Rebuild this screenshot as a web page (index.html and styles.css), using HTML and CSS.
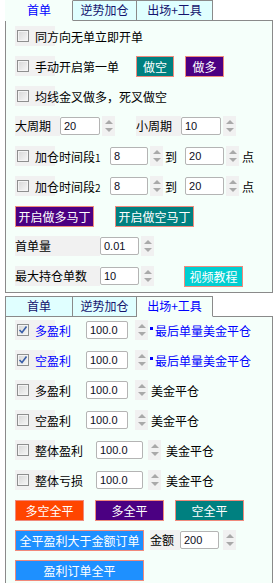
FILE: index.html
```html
<!DOCTYPE html>
<html lang="zh-CN">
<head>
    <meta charset="UTF-8">
    <title>EA 面板</title>
    <link rel="stylesheet" href="styles.css">
</head>
<body>
    <!-- 面板一：首单 -->
    <div class="panel first">
        <div class="tabs">
            <div class="tab t1 active">首单</div>
            <div class="tab t2">逆势加仓</div>
            <div class="tab t3">出场+工具</div>
        </div>
        <div class="body">
            <div class="row">
                <div class="check"><span class="box"></span>同方向无单立即开单</div>
            </div>
            <div class="row">
                <div class="check w121"><span class="box"></span>手动开启第一单</div>
                <div class="btn teal b38">做空</div>
                <div class="btn indigo b39 ml11">做多</div>
            </div>
            <div class="row">
                <div class="check"><span class="box"></span>均线金叉做多，死叉做空</div>
            </div>
            <div class="row">
                <div class="lbl w45">大周期</div>
                <div class="num"><div class="field w40">20</div><div class="spin"></div></div>
                <div class="lbl w45 ml21">小周期</div>
                <div class="num"><div class="field w40">10</div><div class="spin"></div></div>
            </div>
            <div class="row">
                <div class="check w95"><span class="box"></span>加仓时间段<small>1</small></div>
                <div class="num"><div class="field w38">8</div><div class="spin"></div></div>
                <div class="txt ml2">到</div>
                <div class="num ml8"><div class="field w39">20</div><div class="spin"></div></div>
                <div class="txt ml3">点</div>
            </div>
            <div class="row">
                <div class="check w95"><span class="box"></span>加仓时间段<small>2</small></div>
                <div class="num"><div class="field w38">8</div><div class="spin"></div></div>
                <div class="txt ml2">到</div>
                <div class="num ml8"><div class="field w39">20</div><div class="spin"></div></div>
                <div class="txt ml3">点</div>
            </div>
            <div class="row">
                <div class="btn indigo b79">开启做多马丁</div>
                <div class="btn teal b79 ml21">开启做空马丁</div>
            </div>
            <div class="row">
                <div class="lbl w85">首单量</div>
                <div class="num"><div class="field w39">0.01</div><div class="spin"></div></div>
            </div>
            <div class="row">
                <div class="lbl w85">最大持仓单数</div>
                <div class="num"><div class="field w39">10</div><div class="spin"></div></div>
                <div class="btn turq b59 ml30">视频教程</div>
            </div>
        </div>
    </div>

    <!-- 面板二：出场+工具 -->
    <div class="panel second">
        <div class="tabs">
            <div class="tab t1">首单</div>
            <div class="tab t2">逆势加仓</div>
            <div class="tab t3 active">出场+工具</div>
        </div>
        <div class="body">
            <div class="row">
                <div class="check w71 blue"><span class="box on"></span>多盈利</div>
                <div class="num"><div class="field w42">100.0</div><div class="spin ml7"></div></div>
                <div class="txt blue ml2"><span class="dot"></span>最后单量美金平仓</div>
            </div>
            <div class="row">
                <div class="check w71 blue"><span class="box on"></span>空盈利</div>
                <div class="num"><div class="field w42">100.0</div><div class="spin ml7"></div></div>
                <div class="txt blue ml2"><span class="dot"></span>最后单量美金平仓</div>
            </div>
            <div class="row">
                <div class="check w71"><span class="box"></span>多盈利</div>
                <div class="num"><div class="field w42">100.0</div><div class="spin ml7"></div></div>
                <div class="txt ml3">美金平仓</div>
            </div>
            <div class="row">
                <div class="check w71"><span class="box"></span>空盈利</div>
                <div class="num"><div class="field w42">100.0</div><div class="spin ml7"></div></div>
                <div class="txt ml3">美金平仓</div>
            </div>
            <div class="row">
                <div class="check w81"><span class="box"></span>整体盈利</div>
                <div class="num"><div class="field w47">100.0</div><div class="spin ml5"></div></div>
                <div class="txt ml5">美金平仓</div>
            </div>
            <div class="row">
                <div class="check w81"><span class="box"></span>整体亏损</div>
                <div class="num"><div class="field w47">100.0</div><div class="spin ml5"></div></div>
                <div class="txt ml5">美金平仓</div>
            </div>
            <div class="row">
                <div class="btn orange b69">多空全平</div>
                <div class="btn indigo b69 ml11">多全平</div>
                <div class="btn teal b69 ml11">空全平</div>
            </div>
            <div class="row">
                <div class="btn dodger b129">全平盈利大于金额订单</div>
                <div class="lbl ml6 w30">金额</div>
                <div class="num"><div class="field w39">200</div><div class="spin ml4"></div></div>
            </div>
            <div class="row">
                <div class="btn dodger b129">盈利订单全平</div>
            </div>
        </div>
    </div>
</body>
</html>
```

FILE: styles.css
```css
body {
    margin: 0;
    background: #fff;
    font-family: "Noto Sans CJK SC", "Noto Sans", sans-serif;
    font-size: 12px;
    color: #000;
}
.panel {
    margin-left: 5px;
    width: 268px;
}
.panel.second {
    margin-top: 3px;
}
.tabs {
    display: flex;
    height: 21px;
    position: relative;
    z-index: 1;
}
.tab {
    box-sizing: border-box;
    height: 21px;
    line-height: 18px;
    text-align: center;
    background: #e0ffff;
    border: 1px solid #8a8a8a;
    border-left: none;
    color: #14146e;
    font-size: 12px;
}
.tab.t1 { width: 68px; border-left: 1px solid #8a8a8a; }
.tab.t2 { width: 64px; }
.tab.t3 { width: 76px; }
.tab.active {
    background: #f5fffa;
    color: #0000ff;
    border-bottom-color: #f5fffa;
}
.first .tab.active {
    border-top-color: #f5fffa;
    border-left-color: #f5fffa;
}
.body {
    margin-top: -1px;
    background: #f5fffa;
    border: 1px solid #8a8a8a;
    padding: 5px 0 6px 9px;
    display: flex;
    flex-direction: column;
    gap: 10px;
}
.second .body {
    padding-top: 3px;
    padding-bottom: 20px;
}
.row {
    display: flex;
    align-items: center;
    height: 20px;
}
.check {
    display: flex;
    align-items: center;
    height: 20px;
    padding-left: 2px;
    box-sizing: border-box;
    white-space: nowrap;
    background: linear-gradient(to right, #f1f1f1 40px, transparent 40px);
}
.check small {
    font-size: 10px;
    margin-top: 2px;
}
.box {
    box-sizing: border-box;
    width: 12px;
    height: 12px;
    margin-right: 6px;
    border: 1px solid #8e8f8f;
    background: linear-gradient(135deg, #d6d6d6, #f7f7f7);
    box-shadow: inset 0 0 0 1px #f4f4f4;
}
.box.on {
    background:
        url("data:image/svg+xml,%3Csvg xmlns='http://www.w3.org/2000/svg' width='10' height='10'%3E%3Cpath d='M1.5 5 L4 7.5 L8.5 1.5' fill='none' stroke='%233a5ea8' stroke-width='1.6'/%3E%3C/svg%3E") center no-repeat,
        linear-gradient(135deg, #d6d6d6, #f7f7f7);
}
.blue { color: #0000ff; }
.lbl {
    height: 20px;
    line-height: 20px;
    background: #f1f1f1;
    white-space: nowrap;
}
.txt {
    white-space: nowrap;
    display: flex;
    align-items: center;
}
.dot {
    display: inline-block;
    width: 3px;
    height: 3px;
    background: #0000ff;
    margin-right: 2px;
    margin-top: -3px;
}
.num {
    display: flex;
    align-items: center;
}
.field {
    box-sizing: border-box;
    height: 18px;
    line-height: 16px;
    padding-left: 3px;
    background: #fff;
    border: 1px solid #b4b4b4;
    border-radius: 2px;
    font-family: "Liberation Sans", Arial, sans-serif;
    font-size: 11px;
    color: #0c0c1c;
}
.spin {
    position: relative;
    width: 13px;
    height: 20px;
    margin-left: 2px;
    background: #f1f1f1;
}
.spin::before,
.spin::after {
    content: "";
    position: absolute;
    left: 3px;
    border-left: 4px solid transparent;
    border-right: 4px solid transparent;
}
.spin::before {
    top: 4px;
    border-bottom: 4px solid #a9a9a9;
}
.spin::after {
    bottom: 4px;
    border-top: 4px solid #a9a9a9;
}
.btn {
    box-sizing: border-box;
    height: 21px;
    line-height: 19px;
    text-align: center;
    color: #fff;
    border: 1px solid #f08a7c;
    white-space: nowrap;
    font-size: 12px;
}
.teal { background: #008080; }
.indigo { background: #4b0082; }
.turq { background: #00ced1; }
.orange { background: #ff4500; }
.dodger { background: #1e90ff; }

.w30 { width: 30px; }
.w38 { width: 38px; }
.w39 { width: 39px; }
.w40 { width: 40px; }
.w42 { width: 42px; }
.w45 { width: 45px; }
.w47 { width: 47px; }
.w71 { width: 71px; }
.w81 { width: 81px; }
.w85 { width: 85px; }
.w95 { width: 95px; }
.w121 { width: 121px; }
.b38 { width: 38px; }
.b39 { width: 39px; }
.b59 { width: 59px; }
.b69 { width: 69px; }
.b79 { width: 79px; }
.b129 { width: 129px; }
.ml2 { margin-left: 2px; }
.ml3 { margin-left: 3px; }
.ml4 { margin-left: 4px; }
.ml5 { margin-left: 5px; }
.ml6 { margin-left: 6px; }
.ml7 { margin-left: 7px; }
.ml8 { margin-left: 8px; }
.ml11 { margin-left: 11px; }
.ml21 { margin-left: 21px; }
.ml30 { margin-left: 30px; }
```
